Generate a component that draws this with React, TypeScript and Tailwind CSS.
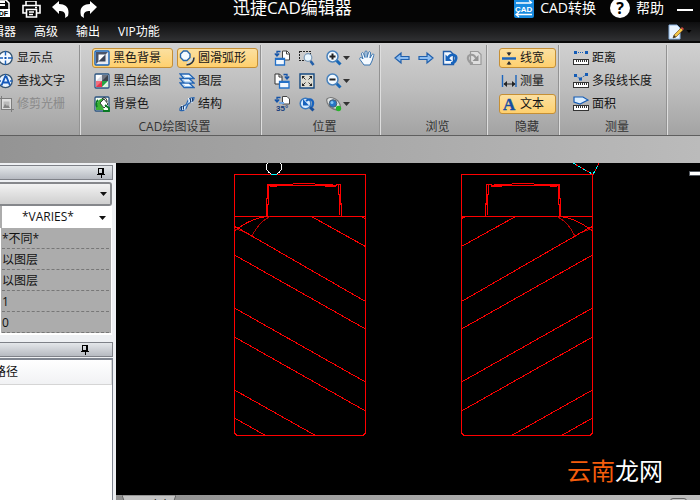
import type { ReactNode } from "react";
import { clsx } from "clsx";

function Icon({ children, className = "h-4 w-4" }: { children: ReactNode; className?: string }) {
  return (
    <svg viewBox="0 0 16 16" aria-hidden="true" fill="none" className={clsx("shrink-0", className)}>
      {children}
    </svg>
  );
}

function Caret({ className = "h-1 w-[7px]" }: { className?: string }) {
  return (
    <svg viewBox="0 0 7 4" aria-hidden="true" className={clsx("shrink-0", className)}>
      <path d="M0 0h7L3.500 4z" fill="currentColor" />
    </svg>
  );
}

function Pin() {
  return (
    <svg viewBox="0 0 8 10" aria-hidden="true" className="h-[10px] w-2">
      <path d="M1.500 .5h5v5h-5zM5.500 .5v5M0 6.500h8M4 6.500V10" fill="none" stroke="#000" shapeRendering="crispEdges" />
    </svg>
  );
}

const icons = {
  point: (
    <Icon>
      <circle cx="7.500" cy="8" r="6.700" fill="#f5faff" stroke="#34536f" strokeWidth="1.300" />
      <path d="M7.500 1v4.500M7.500 10.500V15M.5 8H5M10 8h4.500" stroke="#1c62bd" strokeWidth="1.400" />
      <path d="M6.500 7h2v2h-2z" fill="#0a4fb0" />
    </Icon>
  ),
  find: (
    <Icon>
      <circle cx="7.500" cy="8" r="6.700" fill="#e8f3ff" stroke="#34536f" strokeWidth="1.300" />
      <path d="M7.500 1v2.500M.5 8H3M12 8h2.500" stroke="#1c62bd" strokeWidth="1.300" />
      <path d="M3.500 12.500 7 4h1.500l3.500 8.500M5.500 9.500h4.500" stroke="#1559ba" strokeWidth="1.900" />
    </Icon>
  ),
  trim: (
    <Icon>
      <path d="M3.500 0v13.500H16M0 2.500h13.500V16" stroke="#7d7d7d" shapeRendering="crispEdges" />
      <path d="M4 3h9v10H4z" fill="#dedede" />
      <path d="M5.500 5.500h6v6h-6z" fill="#b9b9b9" />
      <path d="m5 12 2-4 2 2 1-1 2 3z" fill="#858585" />
    </Icon>
  ),
  blackBg: (
    <Icon>
      <rect x="1" y="1" width="14" height="14" rx="1" fill="#e9ecf2" stroke="#1763bb" strokeWidth="1.400" />
      <path d="M2 2h12L2 14z" fill="#4b5468" />
      <path d="M4.500 4.500h7l-7 7z" fill="#fff" />
      <path d="M11.500 4.500v7h-7z" fill="#3b4357" />
    </Icon>
  ),
  mono: (
    <Icon>
      <rect x="1" y="1" width="14" height="14" rx="1" fill="#fff" stroke="#2b5480" strokeWidth="1.300" />
      <path d="M2 8 8 2v6z" fill="#d9dde6" />
      <path d="M8 2h6v6H8z" fill="#3b414b" />
      <path d="M8 2h6L8 8z" fill="#6e7480" />
      <path d="M2 8h6v6H2z" fill="#e4344b" />
      <path d="M2 8h6l-6 6z" fill="#f0707e" />
      <path d="M8 14V8h6z" fill="#26a345" />
      <path d="m9 14 5-5v5z" fill="#d9f4d8" />
    </Icon>
  ),
  bgColor: (
    <Icon>
      <rect x="1" y="1" width="14" height="14" rx="1" fill="#f8fff5" stroke="#2b5480" strokeWidth="1.300" />
      <path d="M2 14V9l3-5 4-2 2 4-3 3 2 5z" fill="#3cb235" />
      <path d="m6 7 4-4 4 5-4 4z" fill="#fff" stroke="#31413a" />
      <path d="M4 4c-2 2-2 5-1 7M11 9l4 3v3H9" stroke="#087923" strokeWidth="1.800" />
      <path d="M8 3c3-3 5 0 5 3" stroke="#222" />
    </Icon>
  ),
  arc: (
    <Icon>
      <path d="M4.500 1h3.500l3 3v3.500l-3 3H4.500l-3-3V4z" fill="#f5fbff" stroke="#2866ab" strokeWidth="1.400" />
      <path d="M15 7.500c0 4-3 7-7.500 7.500" stroke="#243248" strokeWidth="1.600" />
      <path d="M13 8c-.5 2.500-2 4-5 5" stroke="#c8dbf0" strokeWidth="1.400" />
    </Icon>
  ),
  layers: (
    <Icon>
      <path d="M1 10h9l5 4.500H5zM1 5.500h9l5 4.500H5zM1 1h9l5 4.500H5z" fill="#f4faff" stroke="#2465b4" strokeWidth="1.300" />
      <path d="m3.500 2.500 3 2h6M3.500 7l3 2h6M3.500 11.500l3 2h6" stroke="#8bbdec" />
    </Icon>
  ),
  structure: (
    <Icon>
      <path d="M1 14.500c-1-6 5-3 6.500-6.500S9 1.500 15 1.500c0 6-5 4-6.500 7.500S7 15.500 1 14.500z" fill="#b8d7f7" stroke="#2864ae" strokeWidth="1.200" />
      <path d="M2 10c3-1 4 1 4 4.500M9.500 2c0 3 1 5 4.500 4" stroke="#f1f8ff" />
      <path d="M2.500 10v4M4.500 9.500v4M11.500 2.500v4M13.500 2v3.500" stroke="#243e68" />
    </Icon>
  ),
  viewPrev: (
    <Icon>
      <path d="M8.500 1h4.500l2.500 2.500V10h-7z" fill="#fff" stroke="#444" />
      <path d="M12.500 1v3h3" stroke="#444" />
      <path d="M1.500 8.500h9V15h-9z" fill="#f2f8ff" stroke="#2370c7" strokeWidth="1.300" />
      <path d="M1.500 9h9" stroke="#2370c7" strokeWidth="2" />
      <path d="M6.500 1.500H3v4M.8 3.500 3 6l2.200-2.500" stroke="#1554a8" strokeWidth="1.300" />
    </Icon>
  ),
  viewNext: (
    <Icon>
      <path d="M1 1h4.500L8 3.500V11H1z" fill="#fff" stroke="#333" />
      <path d="M5 1v3h3" stroke="#333" />
      <path d="M5.500 8.500h9.500V15H5.500z" fill="#f2f8ff" stroke="#2370c7" strokeWidth="1.300" />
      <path d="M5.500 9H15" stroke="#2370c7" strokeWidth="2" />
      <path d="M9.500 1.500H13v4M10.800 3.500 13 6l2.200-2.500" stroke="#1554a8" strokeWidth="1.300" />
    </Icon>
  ),
  rotate: (
    <Icon>
      <path d="M8.500 .5h4.500l2.500 2.500v5h-7z" fill="#fff" stroke="#444" />
      <path d="M6.500 1.500H3v4M.8 3.500 3 6l2.200-2.500" stroke="#1554a8" strokeWidth="1.300" />
      <path d="M5 6h5v2H5z" fill="#6fa5e2" />
      <text x="2" y="15" fontSize="8" fontWeight="bold" fill="#153e7d" fontFamily="Liberation Sans, sans-serif">35°</text>
    </Icon>
  ),
  zoomWindow: (
    <Icon>
      <path d="M.5 1.500h11v9H.5z" stroke="#222" strokeDasharray="2 1" shapeRendering="crispEdges" />
      <path d="m11.500 11 3 4" stroke="#245fa8" strokeWidth="2.600" />
      <circle cx="9" cy="7.500" r="3.800" fill="#eaf7ff" stroke="#7d9bb9" strokeWidth="1.200" />
    </Icon>
  ),
  extents: (
    <Icon>
      <path d="M1 1h14v14H1z" fill="#dddcd2" stroke="#174b82" strokeWidth="1.400" />
      <path d="M3 3h3L3 6zM13 3v3l-3-3zM3 13v-3l3 3zM13 13h-3l3-3z" fill="#222" />
      <path d="m4 4 2.500 2.500M12 4 9.500 6.500M4 12l2.500-2.500M12 12 9.500 9.500" stroke="#333" />
    </Icon>
  ),
  zoomBack: (
    <Icon>
      <path d="m10 10 4.500 4.500" stroke="#174f9b" strokeWidth="3" />
      <circle cx="6.500" cy="7.500" r="5.300" fill="#d9ecff" stroke="#3979bf" strokeWidth="1.500" />
      <path d="M13 11c3-6-1-10-6-6" stroke="#1762be" strokeWidth="2.200" />
      <path d="M4 3v6.500h6z" fill="#1762be" />
    </Icon>
  ),
  zoomIn: (
    <Icon>
      <path d="m10 10 4.500 4.500" stroke="#1767b6" strokeWidth="3" />
      <circle cx="6.500" cy="6.500" r="5.500" fill="#f3faff" stroke="#4a83bd" strokeWidth="1.500" />
      <path d="M3.500 6.500h6M6.500 3.500v6" stroke="#222" strokeWidth="2" />
    </Icon>
  ),
  zoomOut: (
    <Icon>
      <path d="m10 10 4.500 4.500" stroke="#1767b6" strokeWidth="3" />
      <circle cx="6.500" cy="6.500" r="5.500" fill="#f3faff" stroke="#4a83bd" strokeWidth="1.500" />
      <path d="M3.500 6.500h6" stroke="#222" strokeWidth="2" />
    </Icon>
  ),
  orbit: (
    <Icon>
      <path d="M1 3c3-3 8-1 11 2 3 4 3 7 1 9-4 0-7-1-10-4C1 7 0 5 1 3z" fill="#dfe3e4" stroke="#777" strokeWidth="1.200" />
      <circle cx="7" cy="7.500" r="3.800" fill="#2675c5" stroke="#4f6070" />
      <circle cx="6" cy="6.500" r="1.500" fill="#85c7f4" />
      <circle cx="12.500" cy="12.500" r="2.700" fill="#28b52b" />
    </Icon>
  ),
  hand: (
    <Icon>
      <path d="M5 15 1 9.500c-1-2 1-3 3-.5L2.500 4c0-1.800 1.800-2 2.200 0L6 7.500V2c0-1.500 2-1.500 2 0v5.500L9.500 2.500c.5-1.500 2-1 2 .5L11 8l2-3.500c1-1 2.300-.5 1.700 1L13 11l-2 4z" fill="#f5faff" stroke="#3974af" />
    </Icon>
  ),
  back: (
    <Icon>
      <path d="m1 8 6-5v3.500h8v3H7V13z" fill="#8dbdf0" stroke="#2160ac" strokeWidth="1.200" />
    </Icon>
  ),
  forward: (
    <Icon>
      <path d="M15 8 9 3v3.500H1v3h8V13z" fill="#8dbdf0" stroke="#2160ac" strokeWidth="1.200" />
    </Icon>
  ),
  undoPage: (
    <Icon>
      <path d="M1.500 1.500h7l3 3v10h-10z" fill="#f4f9ff" stroke="#225da8" strokeWidth="1.400" />
      <path d="M9 13.500c5-.5 7-7 3-8.500-3-1-5 1-6 3" stroke="#1764bd" strokeWidth="2.600" />
      <path d="M3.500 4.500V11H10z" fill="#1764bd" />
    </Icon>
  ),
  redoPage: (
    <Icon>
      <path d="M4.500 1.500H12l3 3v10H4.500z" fill="#dedede" stroke="#9a9a9a" strokeWidth="1.200" />
      <path d="M7 13.500C2 13 0 6.500 4 5c3-1 5 1 6 3" stroke="#9a9a9a" strokeWidth="2" />
      <path d="M12.500 5v6H6.500z" fill="#929292" />
    </Icon>
  ),
  lineWidth: (
    <Icon>
      <path d="M1 8.500h14" stroke="#1a64bd" strokeWidth="2.500" />
      <path d="M8 2v3M8 12v3" stroke="#333" />
      <path d="M5.500 2.500h5L8 6zM5.500 14.500h5L8 11z" fill="#333" />
    </Icon>
  ),
  measure: (
    <Icon>
      <path d="M1.500 2v12M15 2v12" stroke="#1b65bd" strokeWidth="1.400" />
      <path d="M3 11h11" stroke="#222" />
      <path d="m2.500 11 3.500-3v6zM14.500 11 11 8v6z" fill="#222" />
    </Icon>
  ),
  text: (
    <Icon>
      <text x="2" y="14" fontSize="17" fontWeight="bold" fill="#174ea3" stroke="#174ea3" strokeWidth=".4" fontFamily="Liberation Serif, serif">A</text>
    </Icon>
  ),
};

// The three measuring tools share the ruler under their own mark.
function RulerIcon({ children }: { children: ReactNode }) {
  return (
    <Icon>
      {children}
      <path d="M.5 9.500h15v5H.5z" fill="#fff" stroke="#333" shapeRendering="crispEdges" />
      <path d="M3.500 10v2M5.500 10v2M7.500 10v2M9.500 10v2M11.500 10v2M13.500 10v2" stroke="#333" shapeRendering="crispEdges" />
    </Icon>
  );
}

function Tool({
  icon,
  label,
  active,
  disabled,
}: {
  icon: ReactNode;
  label: string;
  active?: boolean;
  disabled?: boolean;
}) {
  return (
    <button
      type="button"
      disabled={disabled}
      aria-pressed={active}
      className={clsx(
        "flex h-5 items-center gap-[3px] whitespace-nowrap rounded-[3px] border px-px text-xs",
        active ? "border-[#c58f35] bg-linear-to-b from-[#fbe0a0] to-[#ffd06d]" : "border-transparent",
        disabled ? "text-[#8a8a8a]" : "text-[#161616]",
      )}
    >
      {icon}
      <span>{label}</span>
    </button>
  );
}

function IconButton({ icon, label, menu }: { icon: ReactNode; label: string; menu?: boolean }) {
  return (
    <button type="button" aria-label={label} className="flex h-5 items-center gap-px text-[#333]">
      {icon}
      {menu && <Caret />}
    </button>
  );
}

function Group({ title, className, children }: { title?: string; className: string; children: ReactNode }) {
  return (
    <section className={clsx("flex shrink-0 pt-0.5", className)}>
      <div className="flex min-w-0 flex-1 flex-col pt-[3px]">
        <div className="h-[66px] shrink-0">{children}</div>
        <h2 className="pl-2 pt-1 text-center text-xs leading-[18px] text-[#333]">{title}</h2>
      </div>
      <div className="w-0.5 border-l border-r border-l-[#929292] border-r-[#dedede]" />
    </section>
  );
}

function Ribbon() {
  return (
    <div className="flex h-[93px] shrink-0 overflow-hidden border-b border-[#5f5f5f] bg-linear-to-b from-[#d1d1d1] via-[#bdbdbd] to-[#a3a3a3]">
      <Group className="w-[81px]">
        <div className="-ml-1 flex flex-col gap-[3px]">
          <Tool icon={icons.point} label="显示点" />
          <Tool icon={icons.find} label="查找文字" />
          <Tool icon={icons.trim} label="修剪光栅" disabled />
        </div>
      </Group>
      <Group title="CAD绘图设置" className="w-[181px]">
        <div className="grid grid-cols-2 gap-x-1 gap-y-[3px] pl-[11px] pr-0.5">
          <Tool icon={icons.blackBg} label="黑色背景" active />
          <Tool icon={icons.arc} label="圆滑弧形" active />
          <Tool icon={icons.mono} label="黑白绘图" />
          <Tool icon={icons.layers} label="图层" />
          <Tool icon={icons.bgColor} label="背景色" />
          <Tool icon={icons.structure} label="结构" />
        </div>
      </Group>
      <Group title="位置" className="w-[119px]">
        <div className="flex pl-3">
          <div className="flex w-[25px] flex-col gap-[3px]">
            <IconButton icon={icons.viewPrev} label="上一视图" />
            <IconButton icon={icons.viewNext} label="下一视图" />
            <IconButton icon={icons.rotate} label="旋转视图" />
          </div>
          <div className="flex w-[27px] flex-col gap-[3px]">
            <IconButton icon={icons.zoomWindow} label="窗口缩放" />
            <IconButton icon={icons.extents} label="缩放到范围" />
            <IconButton icon={icons.zoomBack} label="上一缩放" />
          </div>
          <div className="flex w-[33px] flex-col gap-[3px]">
            <IconButton icon={icons.zoomIn} label="放大" menu />
            <IconButton icon={icons.zoomOut} label="缩小" menu />
            <IconButton icon={icons.orbit} label="动态观察" menu />
          </div>
          <IconButton icon={icons.hand} label="平移" />
        </div>
      </Group>
      <Group title="浏览" className="w-[107px]">
        <div className="flex gap-2 pl-[13px]">
          <IconButton icon={icons.back} label="后退" />
          <IconButton icon={icons.forward} label="前进" />
          <IconButton icon={icons.undoPage} label="撤销" />
          <IconButton icon={icons.redoPage} label="重做" />
        </div>
      </Group>
      <Group title="隐藏" className="w-[72px]">
        <div className="flex flex-col gap-[3px] pl-[11px] pr-0.5">
          <Tool icon={icons.lineWidth} label="线宽" active />
          <Tool icon={icons.measure} label="测量" />
          <Tool icon={icons.text} label="文本" active />
        </div>
      </Group>
      <Group title="测量" className="w-[108px]">
        <div className="flex flex-col gap-[3px] pl-[11px]">
          <Tool
            label="距离"
            icon={
              <RulerIcon>
                <path d="M1 1h3v3H1zM12 1h3v3h-3z" fill="#155cb5" />
                <path d="M5 2.500h6" stroke="#155cb5" strokeDasharray="1 1" />
              </RulerIcon>
            }
          />
          <Tool
            label="多段线长度"
            icon={
              <RulerIcon>
                <path d="m2 2 5 4 7-5" stroke="#155cb5" strokeDasharray="1 1" />
                <path d="M1 1h3v3H1zM6 4.500h3v3H6zM12 0h3v3h-3z" fill="#155cb5" />
              </RulerIcon>
            }
          />
          <Tool
            label="面积"
            icon={
              <RulerIcon>
                <path d="M1 1h9l5 3-4 2-4 2-6-2z" fill="#dbeeff" stroke="#155cb5" strokeWidth="1.200" />
              </RulerIcon>
            }
          />
        </div>
      </Group>
    </div>
  );
}

function TitleBar() {
  return (
    <header className="flex h-[22px] shrink-0 items-start bg-[#050505] text-white">
      <div className="flex w-[233px] shrink-0">
        <button type="button" aria-label="导出PDF" className="-ml-2 mr-3">
          <svg viewBox="0 0 18 18" className="h-[18px] w-[18px]" fill="none">
            <path d="M1 0h13l3 3v13H1z" stroke="#fff" strokeWidth="1.500" />
            <path d="M5 2h8M5 5h8" stroke="#fff" strokeWidth="2" />
            <path d="M0 9h18v8H0z" fill="#fff" />
            <text x="2" y="16" fontSize="7" fontWeight="bold" fill="#000" fontFamily="Liberation Sans, sans-serif">PDF</text>
          </svg>
        </button>
        <button type="button" aria-label="打印" className="mr-[11px]">
          <svg viewBox="0 0 19 17" className="h-[17px] w-[19px]" fill="none" stroke="#fff" strokeWidth="1.600">
            <path d="M4 4V0h10v4M4 12H1V4.500h17V12h-3" />
            <path d="M4.500 8.500h10V16h-10zM7 11h5M7 13.500h4M13 6.500h2" />
          </svg>
        </button>
        <button type="button" aria-label="撤销" className="mr-[11px]">
          <svg viewBox="0 0 17 18" className="h-[18px] w-[17px]">
            <path d="M0 7 7 1v3c7 0 11 4 9 12l-3 2c1-5-1-7-6-7v3z" fill="#fff" />
          </svg>
        </button>
        <button type="button" aria-label="重做">
          <svg viewBox="0 0 17 18" className="h-[18px] w-[17px]">
            <path d="m17 7-7-6v3C3 4-1 8 1 16l3 2c-1-5 1-7 6-7v3z" fill="#fff" />
          </svg>
        </button>
      </div>
      <h1 className="flex-1 whitespace-nowrap text-[17px] leading-4">迅捷CAD编辑器</h1>
      <div className="flex h-4 shrink-0 items-center text-sm leading-4">
        <button type="button" className="flex items-center gap-1.5">
          <svg viewBox="0 0 20 20" className="h-5 w-5" aria-hidden="true">
            <rect width="20" height="20" rx="2" fill="#168ae0" />
            <path d="M2 5h15M18 16.500H3M5 14l-3 2.500L5 19M15 2.500 18 5" fill="none" stroke="#fff" strokeWidth="1.300" />
            <text x="1" y="14" fontSize="8" fontWeight="bold" fill="#fff" fontFamily="Liberation Sans, sans-serif">CAD</text>
          </svg>
          <span>CAD转换</span>
        </button>
        <button type="button" className="ml-3.5 mr-[13px] flex items-center gap-1.5">
          <span className="grid h-5 w-5 place-items-center rounded-full bg-white text-base font-bold leading-5 text-black">?</span>
          <span>帮助</span>
        </button>
        <button type="button" aria-label="最小化" className="mr-[7px] mt-1 h-3 w-4">
          <span className="block h-0.5 bg-white" />
        </button>
      </div>
    </header>
  );
}

function MenuBar() {
  return (
    <nav className="flex h-[21px] shrink-0 items-center border-b-2 border-[#090909] bg-linear-to-b from-[#0e0e0f] to-[#303133] text-xs text-white">
      <div className="-ml-5 flex flex-1 gap-[18px]">
        <button type="button">编辑器</button>
        <button type="button">高级</button>
        <button type="button">输出</button>
        <button type="button">VIP功能</button>
      </div>
      <button type="button" aria-label="样式" className="mr-2 flex items-center gap-0.5 text-black">
        <Icon>
          <path d="M1 1h8l3 3v11H1z" fill="#eaf4ff" stroke="#8bb4e2" />
          <path d="m5 14 1-3 7-7 2 2-7 7z" fill="#f3c546" stroke="#7b5420" strokeWidth=".7" />
          <path d="m5 14 1-3 2 2z" fill="#333" />
          <path d="m13 4 2 2 1-1-2-2z" fill="#d84742" />
        </Icon>
        <Caret className="h-[3px] w-1.5" />
      </button>
    </nav>
  );
}

function PanelHeader({ pinned }: { pinned: string }) {
  return (
    <div className="mr-[3px] flex h-[15px] items-center justify-end border border-l-0 border-[#7e8188] bg-linear-to-b from-[#e4e7ea] to-[#b6bac1]">
      <button type="button" aria-label="固定面板" className={pinned}>
        <Pin />
      </button>
    </div>
  );
}

const values = ["*不同*", "以图层", "以图层", "1", "0"];

function Sidebar() {
  return (
    <aside className="flex w-[116px] shrink-0 flex-col overflow-hidden bg-[#eef0f3] pt-0.5 text-xs text-[#111]">
      <PanelHeader pinned="mr-[7px]" />
      <div className="relative mr-1 mt-0.5">
        <select
          aria-label="对象"
          className="block h-6 w-full appearance-none rounded-r-[3px] border-2 border-l-0 border-[#85878b] bg-linear-to-b from-[#f2f2f2] to-[#cfcfcf]"
        />
        <Caret className="pointer-events-none absolute right-[5px] top-2.5 h-1 w-[7px]" />
      </div>
      <div className="mr-1 border-b-2 border-r border-white bg-[#acacac]">
        <div className="relative">
          <select
            aria-label="颜色"
            className="block h-[22px] w-full appearance-none border-l-2 border-[#acacac] bg-white pl-5"
          >
            <option>*VARIES*</option>
          </select>
          <Caret className="pointer-events-none absolute right-[5px] top-2.5 h-1 w-[7px]" />
        </div>
        <ul className="border-l border-white">
          {values.map((value, i) => (
            <li key={i} className="ml-px mr-0.5 h-[21px] border-b border-dashed border-[#777] leading-[22px]">
              {value}
            </li>
          ))}
        </ul>
      </div>
      <div className="mt-[7px]">
        <PanelHeader pinned="mr-[23px]" />
      </div>
      <div className="mr-[3px] mt-px flex-1 border-r border-t-2 border-[#7f8590] bg-white">
        <table className="w-full">
          <thead>
            <tr>
              <th className="h-6 border-b border-r border-[#d5d5d5] bg-linear-to-b from-white to-[#f1f2f4] p-0 text-left font-normal">
                <span className="-ml-1.5">路径</span>
              </th>
            </tr>
          </thead>
        </table>
      </div>
    </aside>
  );
}

function Bed({ mirrored }: { mirrored?: boolean }) {
  return (
    <g transform={mirrored ? "translate(827 0) scale(-1 1)" : undefined}>
      <path d="M234.500 174.500h131v257q0 3-3 4h-125q-3-1-3-4z" />
      <path d="M234.500 216.500h131" />
      <path d="M266.500 216v-17.500h1v-15M267.500 216v-12h1v-18M268.500 195v-9.500h2M267 184.500h4v1h6M270 186.500h7M277 185.500h56M325 186.500h11M293 183.500h22M271 184.500h22M315 184.500h18M333 185.500h3v-1h5M338.500 185v10M340.500 184v20h-1M339.500 194v21M341.500 203v13" />
      <path d="M267 216.500q-16 2-29 12l-4-2.500M234 231l6-4" />
      <path d="M270 216.500q-12 6-18 20-9-7-18-7" stroke="#b80000" />
      <path d="M311.500 216.500l54 30M361 216.500l4.500 2M234.500 226l131 75.500M234.500 255l131 74M234.500 308l131 74M234.500 337l131 74M234.500 390l81 45.500M234.500 418l31 17.500" />
    </g>
  );
}

function Canvas() {
  return (
    <div className="relative min-h-0 flex-1 overflow-hidden bg-black">
      <svg viewBox="116 163 584 332" preserveAspectRatio="xMidYMin meet" className="absolute inset-0 h-full w-full" aria-label="图纸">
        <g fill="none" stroke="#f00" shapeRendering="crispEdges">
          <circle cx="274" cy="167" r="7.500" stroke="#fff" />
          <Bed />
          <Bed mirrored />
          <path d="M271 174.500h6" stroke="#0ff" />
          <path d="M573 163l20 11.500 6-11.500" />
          <path d="M573 163l20 11.500 6-11.500" stroke="#0ff" strokeDasharray="3 3" />
        </g>
        <path d="M689.500 171.500H702v4h-12.500z" fill="#fff" stroke="#555b63" />
      </svg>
      <p className="absolute bottom-2 right-[37px] text-2xl leading-8 text-white">
        <span className="text-[#f45d0c]">云南</span>龙网
      </p>
    </div>
  );
}

export default function App() {
  return (
    <div className="flex h-screen flex-col overflow-hidden bg-[#aaa] font-['Open_Sans','Noto_Sans_CJK_SC',sans-serif]">
      <TitleBar />
      <MenuBar />
      <Ribbon />
      <div className="h-[27px] shrink-0 bg-linear-to-r from-[#949494] to-[#bbbbbb]" />
      <main className="flex min-h-0 flex-1">
        <Sidebar />
        <div className="flex min-w-0 flex-1 flex-col">
          <Canvas />
          <footer className="flex h-[5px] items-start justify-between overflow-hidden bg-linear-to-r from-[#8f8f8f] to-[#bdbdbd] pl-1.5 pr-[13px]">
            <button type="button" className="relative h-5 w-[54px] text-xs leading-4 text-[#222]">
              <svg viewBox="0 0 54 20" className="absolute inset-0" aria-hidden="true">
                <path d="M0 0h54l-7 20H7z" fill="#c4c4c4" stroke="#666" />
              </svg>
              <span className="relative">Model</span>
            </button>
            <button type="button" aria-label="滚动" className="mt-[3px] h-4 w-[17px] rounded-[3px] border border-[#666] bg-[#c6c6c6]" />
          </footer>
        </div>
      </main>
    </div>
  );
}
